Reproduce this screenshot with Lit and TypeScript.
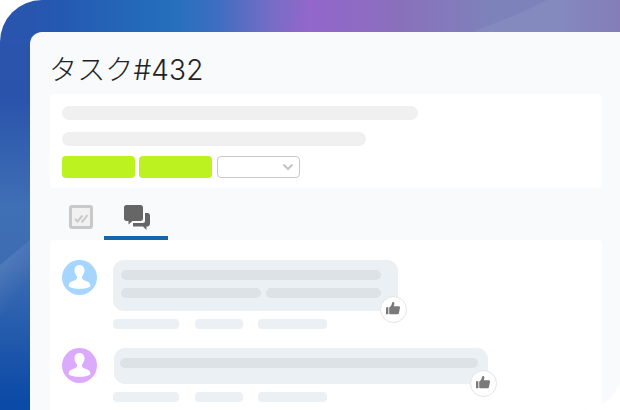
import { LitElement, html, css, svg } from "lit";
import { customElement } from "lit/decorators.js";

const person = svg`<path fill="#fff" d="M17.500 5c-3 0-5 2.200-5 5.300 0 2.400.9 4.400 2 5.600.4.500.6 1 .6 1.800 0 1.400-1.300 2.300-3.400 3-2.700.9-4.700 1.800-5 4.300v1.400c2.500 1.500 6.400 2.400 10.800 2.400s8.300-.9 10.800-2.400v-1.400c-.3-2.500-2.300-3.400-5-4.300-2.100-.7-3.400-1.600-3.400-3 0-.8.2-1.300.6-1.800 1.100-1.200 2-3.200 2-5.600 0-3.100-2-5.300-5-5.300z"/>`;

const thumb = html`<svg class="thumb" viewBox="0 0 16 16"><path fill="#7a7a7a" d="M0 6.600h2.500v7.600H0zM3.400 6.800c1.500-1 2.800-2.500 3-4.800.1-1.300 2.300-1.300 2.500.4.100 1.100-.2 2.200-.6 3.200h5.200c1 0 1.500.7 1.400 1.500l-1.100 5.900c-.2.800-.7 1.200-1.500 1.200H5.500c-.9 0-1.500-.3-2.100-.7z"/></svg>`;

@customElement("app-root")
export class AppRoot extends LitElement {
  static styles = css`
    :host { display: block; width: 620px; height: 410px; overflow: hidden; background: #fff; }
    .frame {
      box-sizing: border-box; width: 622px; height: 410px; padding: 32px 0 0 30px;
      border-top-left-radius: 42px; position: relative; overflow: hidden;
      background:
        linear-gradient(90deg, #2a55ae 0px, #2856af 30px, #2559b1 60px, #2470bd 170px, #3c6ec0 215px, #7a6cc6 275px, #9068ca 310px, #8a70bc 400px, #7d82ba 490px, #7d82ba 560px, #7e75b4 620px) 0 0 / 100% 44px no-repeat,
        linear-gradient(180deg, #2a55ae 0px, #2a54ab 100px, #3f6fb5 205px, #3d6cb3 265px, #0b4aa6 400px) 0 0 / 44px 100% no-repeat;
    }
    .sheen { position: absolute; left: 0; top: 0; width: 620px; height: 410px; }
    .panel {
      position: relative; box-sizing: border-box; width: 592px; height: 378px;
      background: #f8fafc; border-top-left-radius: 12px;
      border-bottom-right-radius: 40px;
      overflow: hidden; padding: 0 20px;
      display: flex; flex-direction: column;
    }
    .title {
      flex: none; font: 300 28px/1 Inter, "Noto Sans CJK JP", sans-serif; color: #222;
      height: 62px; padding: 24px 0 0 0; box-sizing: border-box; margin: 0 0 0 -1px;
      white-space: nowrap; letter-spacing: .15px;
    }
    .card { background: #fff; border-radius: 4px; flex: none; }
    .top { height: 94px; box-sizing: border-box; padding: 12px; display: flex; flex-direction: column; }
    .bar { height: 14px; border-radius: 7px; background: #f0f0f0; flex: none; }
    .w1 { width: 356px; margin-bottom: 12px; }
    .w2 { width: 304px; margin-bottom: 10px; }
    .actions { display: flex; }
    .btn { width: 73px; height: 22px; border-radius: 4px; background: #bbf220; margin-right: 4px; }
    .select {
      width: 83px; height: 22px; box-sizing: border-box; margin-left: 1px;
      border: 1px solid #c8c8c8; border-radius: 4px; background: #fff;
      display: flex; align-items: center; justify-content: flex-end; padding-right: 5px;
    }
    .tabs { flex: none; height: 52px; display: flex; padding-left: 6px; }
    .tab { box-sizing: border-box; height: 52px; display: flex; justify-content: center; padding-top: 17px; }
    .t1 { width: 48px; padding-left: 1px; }
    .t2 { width: 64px; border-bottom: 4px solid #1466ae; padding-left: 1px; }
    .list { flex: 1 0 auto; padding: 20px 0 0 12px; }
    .comment { display: grid; grid-template-columns: 35px auto; column-gap: 16px; justify-content: start; margin-bottom: 19px; }
    .avatar { width: 35px; height: 35px; border-radius: 50%; }
    .avatar svg { display: block; }
    .blue { background: #a6d5ff; }
    .purple { background: #dcaafc; }
    .bubble {
      position: relative; box-sizing: border-box; background: #ebf0f4; border-radius: 11px;
      display: flex; flex-direction: column; gap: 8px; padding: 10px 17px 13px 8px;
    }
    .second .bubble { margin-left: 1px; padding: 10px 10px 16px 6px; }
    .line { display: flex; gap: 5px; }
    .sk { height: 10px; border-radius: 5px; background: #dde2e6; }
    .like {
      position: absolute; right: -9px; bottom: -12px; box-sizing: border-box; width: 27px; height: 27px;
      border-radius: 50%; background: #fff; border: 1px solid #e4e4e4;
      display: flex; align-items: center; justify-content: center;
    }
    .second .like { bottom: -13px; }
    .meta { grid-column: 2; display: flex; margin-top: 8px; }
    .m { height: 10px; border-radius: 4px; background: #ebf0f4; }
    .m1 { width: 66px; margin-right: 16px; }
    .m2 { width: 48px; margin-right: 15px; }
    .m3 { width: 69px; }
    .thumb { display: block; width: 15px; height: 15px; margin-top: -2px; }
  `;

  private comment(color: string, width: number, lines: number[][], cls: string) {
    return html`<div class="comment ${cls}">
      <div class="avatar ${color}">
        <svg viewBox="0 0 35 35" width="35" height="35">${person}</svg>
      </div>
      <div class="bubble" style="width:${width}px">
        ${lines.map((l) => html`<div class="line">${l.map((w) => html`<div class="sk" style="width:${w}px"></div>`)}</div>`)}
        <div class="like">${thumb}</div>
      </div>
      <div class="meta">
        <div class="m m1"></div>
        <div class="m m2"></div>
        <div class="m m3"></div>
      </div>
    </div>`;
  }

  render() {
    return html`<div class="frame">
      <svg class="sheen" viewBox="0 0 620 410">
        <defs>
          <linearGradient id="fade" x1="0" y1="0" x2="0.25" y2="1">
            <stop offset="0" stop-color="#fff" stop-opacity=".14"/>
            <stop offset=".45" stop-color="#fff" stop-opacity="0"/>
          </linearGradient>
          <linearGradient id="pur" x1="0" y1="0" x2="1" y2="0">
            <stop offset="0" stop-color="#a05ed2" stop-opacity=".2"/>
            <stop offset="1" stop-color="#a05ed2" stop-opacity="0"/>
          </linearGradient>
        </defs>
        <path d="M311 0L284 32H400V0z" fill="url(#pur)"/>
        <path d="M620 0H547C520 14 495 23 473 32H620z" fill="#fff" opacity=".06"/>
        <path d="M0 265L30 240V410H0z" fill="url(#fade)"/>
      </svg>
      <div class="panel">
        <h1 class="title">タスク#432</h1>
        <div class="card top">
          <div class="bar w1"></div>
          <div class="bar w2"></div>
          <div class="actions">
            <div class="btn"></div><div class="btn"></div>
            <div class="select">
              <svg width="12" height="8" viewBox="0 0 12 8"><path d="M1.500 1.500L6 6l4.500-4.500" fill="none" stroke="#c4c4c4" stroke-width="2"/></svg>
            </div>
          </div>
        </div>
        <div class="tabs">
          <div class="tab t1">
            <svg width="24" height="24" viewBox="0 0 24 24">
              <rect x="1.500" y="1.500" width="21" height="21" rx="1.500" fill="#f1f1f1" stroke="#c9c9c9" stroke-width="3"/>
              <path fill="none" stroke="#c9c9c9" stroke-width="2" d="M6 14l2.500 2.500 5-6M12.500 15.500l1 1 5-6.500"/>
            </svg>
          </div>
          <div class="tab t2">
            <svg width="26" height="26" viewBox="0 0 26 26">
              <path fill="#666" d="M2.500 0h14C18 0 19 1 19 2.500v11c0 1.500-1 2.500-2.500 2.500H8.500L4.500 19.500V16h-2C1 16 0 15 0 13.500v-11C0 1 1 0 2.500 0z"/>
              <path fill="#666" d="M21 8h2.500C25 8 26 9 26 10.500v8c0 1.500-1 3-2.500 3H22.500V25l-3.500-3.500H9V18h10c1.200 0 2-.8 2-2z"/>
            </svg>
          </div>
        </div>
        <div class="card list">
          ${this.comment("blue", 285, [[260], [140, 115]], "first")}
          ${this.comment("purple", 374, [[358]], "second")}
        </div>
      </div>
    </div>`;
  }
}
